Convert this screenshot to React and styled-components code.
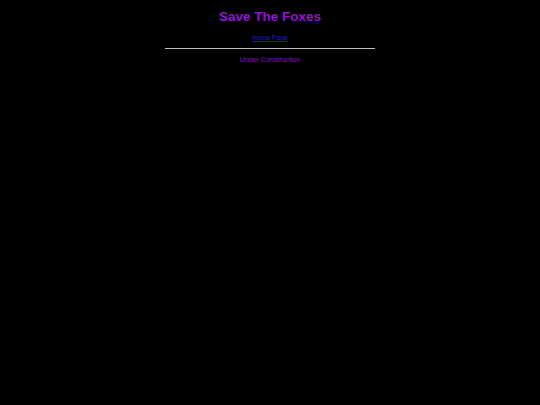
import React from "react";
import styled, { createGlobalStyle } from "styled-components";

const GlobalStyle = createGlobalStyle`
  html, body {
    margin: 0;
    padding: 0;
    background: #000;
    font-family: "Liberation Sans", Arial, sans-serif;
  }
`;

const Page = styled.div`
  display: flex;
  flex-direction: column;
  align-items: center;
  min-height: 405px;
  background: #000;
  padding-top: 9px;
`;

const Title = styled.h1`
  margin: 0;
  font-size: 13.5px;
  font-weight: bold;
  color: #9313d6;
`;

const NavLink = styled.a`
  margin-top: 10px;
  font-size: 6.7px;
  color: #1a1ad6;
  text-decoration: underline;
`;

const Rule = styled.hr`
  width: 210px;
  margin: 7px 0 0;
  border: none;
  border-top: 1px solid #bdbdbd;
`;

const Notice = styled.p`
  margin: 7px 0 0;
  font-size: 7px;
  color: #8a10c8;
`;

export default function App() {
  return (
    <>
      <GlobalStyle />
      <Page>
        <Title>Save The Foxes</Title>
        <NavLink href="#">Home Page</NavLink>
        <Rule />
        <Notice>Under Construction</Notice>
      </Page>
    </>
  );
}
